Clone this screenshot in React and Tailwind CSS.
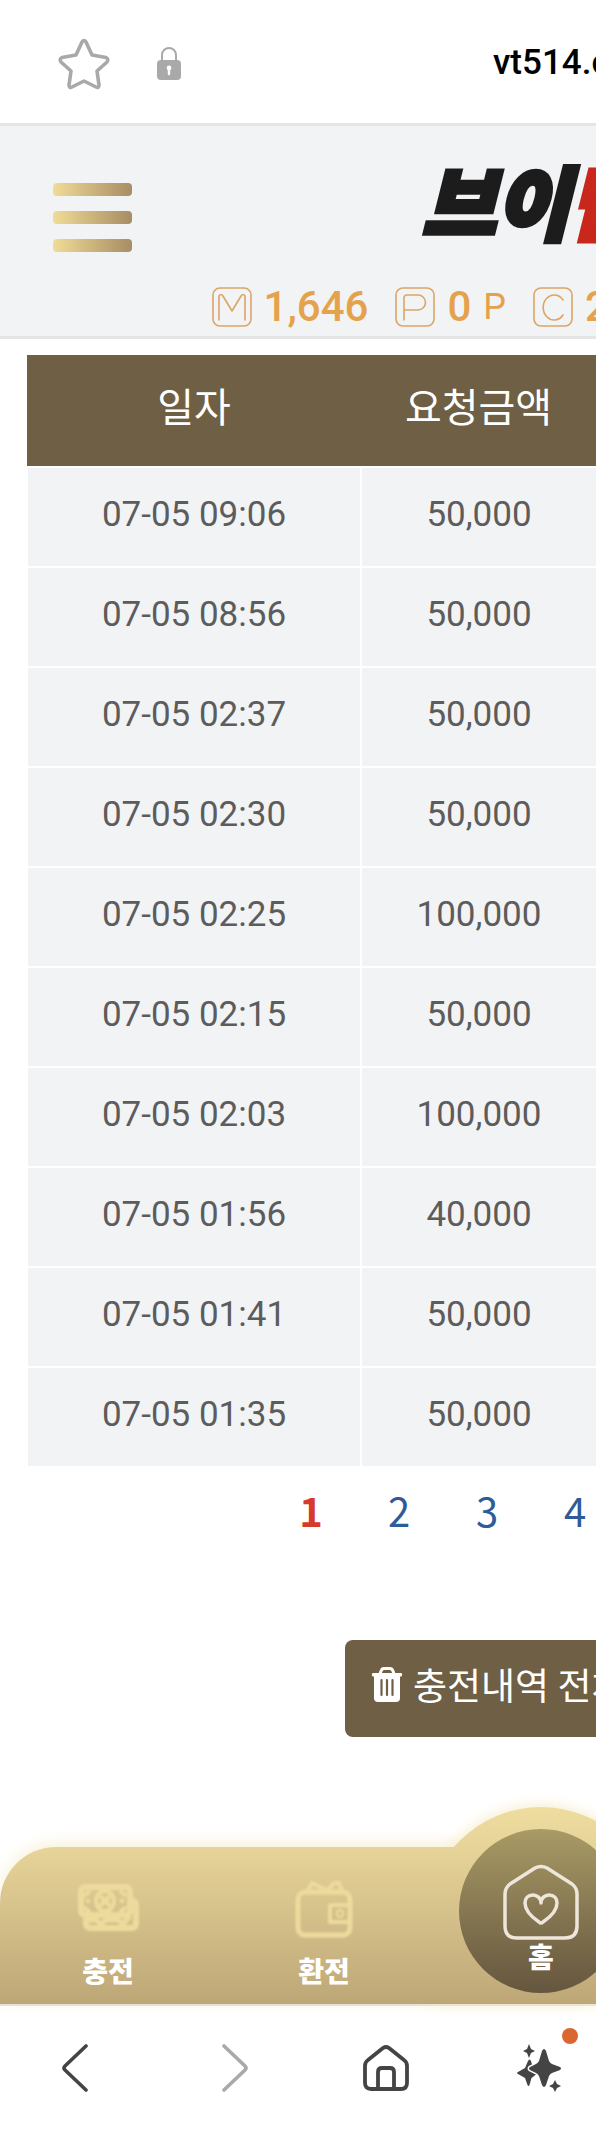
import clsx from 'clsx';

const rows = [
  { date: '07-05 09:06', amount: '50,000' },
  { date: '07-05 08:56', amount: '50,000' },
  { date: '07-05 02:37', amount: '50,000' },
  { date: '07-05 02:30', amount: '50,000' },
  { date: '07-05 02:25', amount: '100,000' },
  { date: '07-05 02:15', amount: '50,000' },
  { date: '07-05 02:03', amount: '100,000' },
  { date: '07-05 01:56', amount: '40,000' },
  { date: '07-05 01:41', amount: '50,000' },
  { date: '07-05 01:35', amount: '50,000' }
];

const pages = [1, 2, 3, 4];

const badgePaths = {
  M: 'M7 33V9Q9 6 11 9L20 24L29 9Q31 6 33 9V33',
  P: 'M9 33V11Q9 8 12 8H23A7.5 7.5 0 0 1 23 23H9',
  C: 'M30 13A11 12.500 0 1 0 30 28'
};

const Badge = ({ type }) => (
  <svg className="h-10 w-10 shrink-0" viewBox="0 0 40 40" fill="none" stroke="#dba566" aria-hidden="true">
    <rect x="1" y="1" width="38" height="38" rx="7" strokeWidth="1.6" />
    <path d={badgePaths[type]} strokeWidth="1.6" strokeLinecap="round" strokeLinejoin="round" />
  </svg>
);

const AddressBar = () => (
  <div className="flex h-[126px] items-center border-b-3 border-[#e5e5e5] bg-white pt-1 pl-[58px]">
    <button aria-label="즐겨찾기" className="shrink-0">
      <svg className="h-[52px] w-[52px]" viewBox="0 0 52 52" fill="none" stroke="#a9a9a9" strokeWidth="3.6" strokeLinejoin="round">
        <path d="M24 4Q26 1 28 4L34 17L48 19.500Q51 21 49 24L39 33L41 47Q41 50.500 38 49L26 43L14 49Q11 50.500 11 47L13 33L3 24Q1 21 4 19.500L18 17Z" />
      </svg>
    </button>
    <svg className="ml-[47px] h-[34px] w-6 shrink-0" viewBox="0 0 24 34" aria-hidden="true">
      <path d="M5 14V8a7 7 0 0 1 14 0v6" fill="none" stroke="#a9a9a9" strokeWidth="2" />
      <rect y="13" width="24" height="20" rx="4" fill="#a9a9a9" />
      <circle cx="12" cy="21" r="2.4" fill="#fff" />
      <path d="M12 21v6" stroke="#fff" strokeWidth="2.400" strokeLinecap="round" />
    </svg>
    <span className="ml-auto w-[103px] whitespace-nowrap font-[Roboto,sans-serif] text-[35px] font-medium text-black">
      vt514.com
    </span>
  </div>
);

const Header = () => (
  <header className="border-b-3 border-[#e5e5e5] bg-[#f2f3f5]">
    <div className="flex h-[156px] items-start justify-between pt-[57px] pl-[53px]">
      <button aria-label="메뉴" className="flex flex-col gap-[15px]">
        {[0, 1, 2].map((bar) => (
          <span key={bar} className="h-[13px] w-[79px] rounded-sm bg-linear-to-r from-[#f0dc98] to-[#a88d64]" />
        ))}
      </button>
      <a
        href="#home"
        className="-mt-8 w-[174px] whitespace-nowrap text-[80px] leading-[96px] font-black text-[#1c1c1c] italic [-webkit-text-stroke:5px_#1c1c1c]"
      >
        브이<span className="text-[#c9271c] [-webkit-text-stroke:5px_#c9271c]">탑</span>
      </a>
    </div>
    <div className="flex h-[54px] items-start justify-end gap-[27px] overflow-hidden pt-[5px] font-[Roboto,sans-serif] text-[42px] leading-10 font-medium whitespace-nowrap text-[#e5a24d]">
      <span className="flex shrink-0 items-center gap-3"><Badge type="M" />1,646</span>
      <span className="flex shrink-0 items-center gap-3">
        <Badge type="P" />0<span className="text-[36px] font-normal">P</span>
      </span>
      <span className="flex w-[63px] shrink-0 items-center gap-3"><Badge type="C" />2</span>
    </div>
  </header>
);

const HistoryTable = () => (
  <table className="ml-[27px] w-[calc(100%-27px)] table-fixed border-separate border-spacing-0 text-center">
    <thead>
      <tr className="h-[111px] bg-[#6e5f45] text-[40px] text-white">
        <th scope="col" className="w-[334px] pb-3 font-normal">일자</th>
        <th scope="col" className="pb-3 font-normal">요청금액</th>
      </tr>
    </thead>
    <tbody>
      {rows.map((row) => (
        <tr key={row.date} className="h-[100px] font-[Roboto,sans-serif] text-[35px] text-[#5c5c5c]">
          <td className="border-x border-t-2 border-white bg-[#f2f3f5] pb-1">{row.date}</td>
          <td className="border-t-2 border-l border-white bg-[#f2f3f5] pb-1">{row.amount}</td>
        </tr>
      ))}
    </tbody>
  </table>
);

const Pagination = () => (
  <nav aria-label="페이지" className="ml-auto flex w-[329px] pt-[18px]">
    {pages.map((page) => (
      <a
        key={page}
        href={`#page-${page}`}
        className={clsx(
          'w-[88px] shrink-0 text-center text-[40px] leading-[52px]',
          page === 1 ? 'font-bold text-[#d63a2a]' : 'text-[#2f5c99]'
        )}
      >
        {page}
      </a>
    ))}
  </nav>
);

const TrashIcon = () => (
  <svg className="h-[35px] w-8 shrink-0" viewBox="0 0 32 35" aria-hidden="true">
    <path d="M9 7L10 4Q11 1.500 13 1.500H19Q21 1.500 22 4L23 7" fill="none" stroke="#fff" strokeWidth="3" />
    <path d="M1.500 6H30.500Q32 7.500 30.500 9.500H1.500Q0 7.500 1.500 6Z" fill="#fff" />
    <path d="M3 9H29V31Q29 35 25 35H7Q3 35 3 31Z" fill="#fff" />
    <path d="M10.500 13V28M16 13V28M21.500 13V28" stroke="#6e5f45" strokeWidth="2.200" strokeLinecap="round" />
  </svg>
);

const MoneyIcon = () => (
  <svg className="h-[52px] w-16 blur-[1px]" viewBox="0 0 64 52" fill="none" stroke="#eddb9d" strokeWidth="6" strokeLinejoin="round" aria-hidden="true">
    <rect x="5" y="5" width="49" height="28" rx="4" />
    <path d="M10 36V41Q10 46 15 46H55Q60 46 60 41V24Q60 19 55 18" />
    <ellipse cx="29" cy="19" rx="9" ry="10" strokeWidth="4" />
    <path d="M24 14L34 24M34 14L24 24M8 14L14 9M8 25L14 30M50 14L44 9M50 25L44 30M10 19H14M44 19H48" strokeWidth="4" />
    <path d="M12 38H20L25 42L30 38H42L47 42L54 34" strokeWidth="5" />
  </svg>
);

const WalletIcon = () => (
  <svg className="h-[60px] w-[60px] blur-[1px]" viewBox="0 0 60 60" fill="none" stroke="#eddb9d" strokeWidth="5" strokeLinejoin="round" aria-hidden="true">
    <rect x="4" y="14" width="52" height="43" rx="7" />
    <path d="M14 12L18 5L26 9L34 12L40 5H45L48 12" strokeWidth="4" />
    <path d="M56 27H36V44H56" strokeWidth="4" />
    <rect x="43" y="32" width="6" height="7" rx="3" strokeWidth="2" />
  </svg>
);

const HomeHeartIcon = () => (
  <svg className="h-[76px] w-[76px]" viewBox="0 0 76 76" fill="none" stroke="#eee6da" strokeWidth="3.500" strokeLinejoin="round" aria-hidden="true">
    <path d="M32 4Q38 1 44 4L69 20Q74 24 74 30V62Q74 74 62 74H14Q2 74 2 62V30Q2 24 7 20Z" />
    <path d="M38 39C38 34 34 31 30 31C25 31 22 34 22 39C22 47 30 54 36 58Q38 60 40 58C46 54 54 47 54 39C54 34 51 31 46 31C42 31 38 34 38 39Z" />
  </svg>
);

const BottomMenu = () => (
  <div className="relative isolate rounded-tl-[56px] border-b-2 border-[#e9e1d4] shadow-[0_-4px_16px_#f8f1da]">
    {/* dome that rises behind the home button */}
    <div className="absolute bottom-0 left-[426px] -z-10 h-[197px] w-[230px] rounded-t-[115px] bg-linear-to-b from-[#efdc9f] to-[#c8b481] shadow-[0_-2px_14px_#f6edcf]" />
    <nav
      aria-label="하단 메뉴"
      className="flex h-[157px] rounded-tl-[56px] bg-linear-to-b from-[#e7d499] to-[#bda777] text-[28px] leading-8 font-black text-white"
    >
      <a href="#charge" className="flex w-[216px] shrink-0 flex-col items-center justify-end gap-5 pb-[18px]">
        <MoneyIcon />
        충전
      </a>
      <a href="#withdraw" className="flex w-[216px] shrink-0 flex-col items-center justify-end gap-4 pb-[18px]">
        <WalletIcon />
        환전
      </a>
      <a href="#home" className="flex w-[218px] shrink-0 items-end justify-center pb-[11px]">
        <span className="flex h-[164px] w-[164px] flex-col items-center rounded-full bg-linear-to-b from-[#a99b65] to-[#65563f] pt-[35px]">
          <HomeHeartIcon />
          홈
        </span>
      </a>
    </nav>
  </div>
);

const BrowserBar = () => (
  <div className="flex h-[124px] items-center gap-[107px] bg-white pl-[51px] text-[#444]">
    <button aria-label="뒤로" className="shrink-0">
      <svg className="h-12 w-12" viewBox="0 0 48 48" fill="none" stroke="currentColor" strokeWidth="3.600" strokeLinecap="round" strokeLinejoin="round">
        <path d="M35 2L14 22Q12 24 14 26L35 46" />
      </svg>
    </button>
    <button aria-label="앞으로" className="shrink-0 text-[#a9a9a9]">
      <svg className="h-12 w-12" viewBox="0 0 48 48" fill="none" stroke="currentColor" strokeWidth="3.600" strokeLinecap="round" strokeLinejoin="round">
        <path d="M18 2L39 22Q41 24 39 26L18 46" />
      </svg>
    </button>
    <button aria-label="홈 화면" className="shrink-0">
      <svg className="h-12 w-12" viewBox="0 0 48 48" fill="none" stroke="currentColor" strokeWidth="3.800" strokeLinejoin="round">
        <path d="M22 4Q25 2 28 4L43 16Q46 18 46 22V39Q46 45 40 45H10Q4 45 4 39V22Q4 18 7 16Z" />
        <path d="M17 45V28Q17 24 21 24H29Q33 24 33 28V45" />
      </svg>
    </button>
    <button aria-label="추천" className="relative shrink-0">
      <svg className="h-12 w-12 overflow-visible" viewBox="0 0 48 48" fill="currentColor">
        <path d="M12 17Q13.500 14 15 17L17 24L22 29L15.500 34L13.500 41Q12.500 43 11.500 41L9 34L2 30Q0 29 2 28L9 24Z" />
        <path
          d="M26 7Q28 3 30 7L33 17Q34 19 36 20L44 23Q46 24.500 44 26L36 29Q34 30 33 32L30 41Q28 45 26 41L23 32Q22 30 20 29L14 26Q12 24.500 14 23L20 20Q22 19 23 17Z"
          stroke="#fff"
          strokeWidth="3"
          paintOrder="stroke"
        />
        <path d="M13 0L15 5L19 7L15 9L13 14L11 9L7 7L11 5Z" />
        <path d="M39 36L41 40L45 42L41 44L39 48L37 44L33 42L37 40Z" />
      </svg>
      <span className="absolute -top-4 -right-[14px] h-4 w-4 rounded-full bg-[#dc662f]" />
    </button>
  </div>
);

const App = () => (
  <div className="flex min-h-screen flex-col overflow-hidden bg-white font-['Noto_Sans_CJK_KR',sans-serif]">
    <AddressBar />
    <Header />
    <main className="grow pt-4 pb-[110px]">
      <HistoryTable />
      <Pagination />
      <button className="mt-[104px] ml-auto flex h-[97px] w-[251px] items-center gap-[10px] overflow-hidden rounded-l-lg bg-[#6e5f45] pb-2 pl-[26px] text-[37px] whitespace-nowrap text-white">
        <TrashIcon />
        충전내역 전체삭제
      </button>
    </main>
    <BottomMenu />
    <BrowserBar />
  </div>
);

export default App;
